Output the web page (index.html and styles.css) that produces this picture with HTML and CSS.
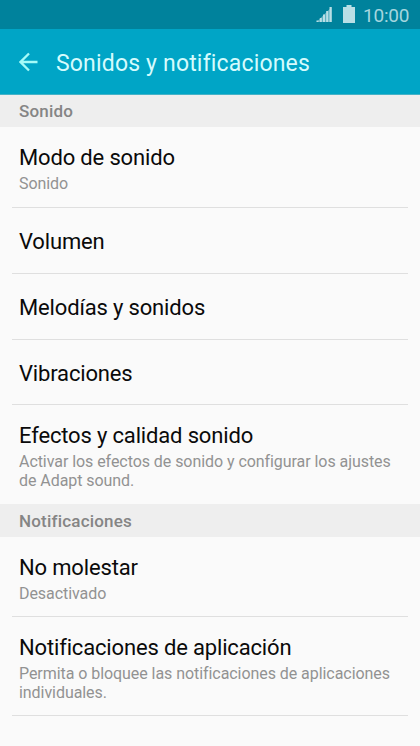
FILE: index.html
```html
<!DOCTYPE html>
<html lang="es">
<head>
<meta charset="utf-8">
<title>Sonidos y notificaciones</title>
<link rel="stylesheet" href="styles.css">
</head>
<body>
<div class="status">
<svg class="signal" width="17" height="16" viewBox="0 0 17 16"><path d="M.5 13.500h2v1.500h-2zM3.800 11h2v4h-2zM7 7.500h2V15H7zM10.200 4h2v11h-2zM13.500 0h2.200v15h-2.200z"/><path class="wedge" d="M.5 15L15.700 0v15z"/></svg>
<svg class="battery" width="12" height="18" viewBox="0 0 12 18"><path d="M3.500 0h5v2H12v16H0V2h3.500z"/></svg>
<span class="clock">10:00</span>
</div>
<header class="bar">
<svg class="back" width="20" height="20" viewBox="0 0 20 20"><path d="M18.500 10H1.500M10 1.500L1.500 10l8.500 8.500"/></svg>
<h1>Sonidos y notificaciones</h1>
</header>
<main>
<h2>Sonido</h2>
<ul>
<li class="two"><h3>Modo de sonido</h3><p>Sonido</p></li>
<li class="one"><h3>Volumen</h3></li>
<li class="one"><h3>Melodías y sonidos</h3></li>
<li class="one short"><h3>Vibraciones</h3></li>
<li class="three last"><h3>Efectos y calidad sonido</h3><p>Activar los efectos de sonido y configurar los ajustes<br>de Adapt sound.</p></li>
</ul>
<h2 class="tall">Notificaciones</h2>
<ul>
<li class="two upper"><h3>No molestar</h3><p>Desactivado</p></li>
<li class="three"><h3>Notificaciones de aplicación</h3><p>Permita o bloquee las notificaciones de aplicaciones<br>individuales.</p></li>
</ul>
</main>
</body>
</html>
```
FILE: styles.css
```css
* { box-sizing: border-box; margin: 0; padding: 0; }
body { width: 420px; height: 746px; overflow: hidden; background: #fafafa; font-family: Roboto, sans-serif; color: #0a0a0a; }
.status { height: 29px; background: #00829c; display: flex; align-items: center; padding: 0 11px 0 316px; }
.signal, .battery { fill: #b9dfe6; flex: none; }
.wedge { opacity: .5; }
.battery { margin-left: 10px; margin-top: -1px; }
.clock { margin-left: 8px; font-size: 19px; line-height: 29px; padding-top: 1px; color: #a5d6df; white-space: nowrap; letter-spacing: -.2px; }
.bar { height: 66px; background: #00a5c6; border-bottom: 1px solid #45b2c7; display: flex; align-items: center; padding-left: 19px; }
.back { fill: none; stroke: #a5fbf8; stroke-width: 2.3; }
h1 { margin-left: 17px; padding-top: 3px; font-size: 23px; font-weight: 400; color: #d5fbfd; white-space: nowrap; letter-spacing: .17px; }
h2 { height: 32px; line-height: 33px; padding-left: 19px; background: #eee; color: #858585; font-size: 17px; font-weight: 500; letter-spacing: .2px; }
h2.tall { height: 33px; line-height: 34px; }
ul { list-style: none; padding: 0 12px; }
li { padding: 0 7px; border-bottom: 1px solid #dfdfdf; }
h3 { font-size: 22px; line-height: 26px; font-weight: 400; white-space: nowrap; letter-spacing: -.16px; }
p { font-size: 16px; line-height: 19px; color: #929292; white-space: nowrap; letter-spacing: -.06px; }
.two { height: 81px; padding-top: 18px; }
.two p, .three p { margin-top: 3px; }
.two.upper { height: 80px; }
.one { height: 66px; padding-top: 21px; }
.one.short { height: 65px; }
.three { height: 99px; padding-top: 18px; }
.last { border-bottom: 0; }
```
